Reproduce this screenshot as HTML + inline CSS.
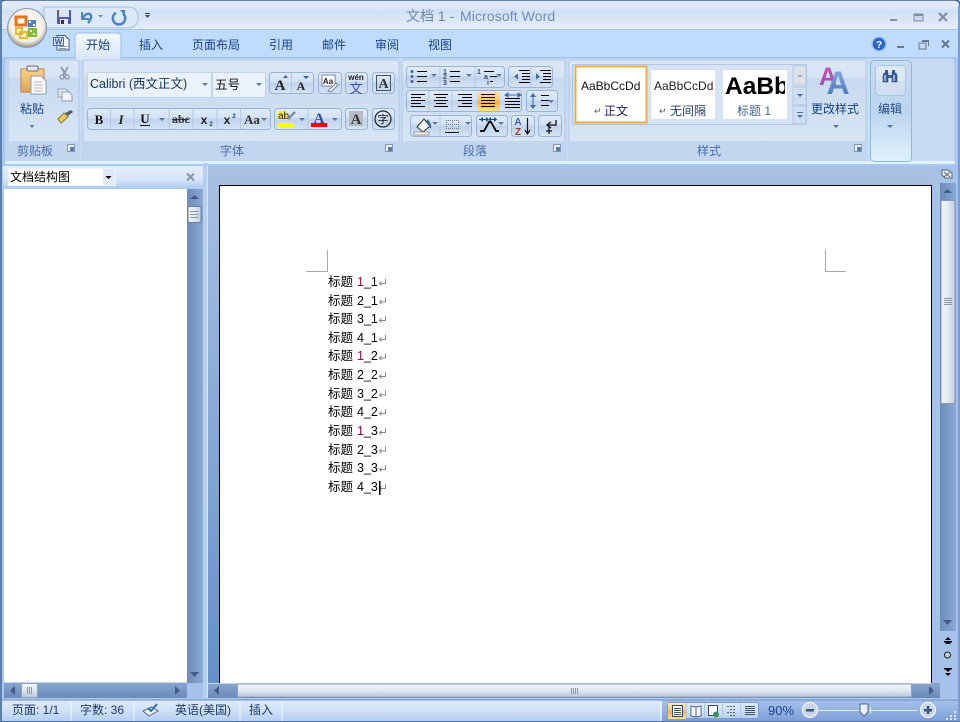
<!DOCTYPE html>
<html lang="zh"><head><meta charset="utf-8"><title>文档 1 - Microsoft Word</title>
<style>
html,body{margin:0;padding:0;background:#bfdbff;width:960px;height:722px;overflow:hidden}
svg{position:absolute;left:0;top:0;display:block}
text{font-family:"Liberation Sans","Noto Sans CJK SC",sans-serif;font-size:12px;fill:#15428b}
.k{fill:#111}.s{fill:#000;font-family:"Liberation Sans","WenQuanYi Zen Hei","Noto Sans CJK SC",sans-serif;font-size:12.5px}
.f{fill:#4a6ea9}
.l{stroke:#000;stroke-width:1;shape-rendering:crispEdges;fill:none}
.a{fill:#56749f}
</style></head><body>
<svg width="960" height="722" viewBox="0 0 960 722" xmlns="http://www.w3.org/2000/svg">
<defs>
<linearGradient id="t" x1="0" y1="0" x2="0" y2="1"><stop offset="0" stop-color="#e3eefb"/><stop offset=".3" stop-color="#d9e7f8"/><stop offset=".35" stop-color="#cfe0f5"/><stop offset="1" stop-color="#e4eefb"/></linearGradient>
<linearGradient id="g" x1="0" y1="0" x2="0" y2="1"><stop offset="0" stop-color="#dbe7f6"/><stop offset=".17" stop-color="#d6e3f4"/><stop offset=".19" stop-color="#c9daf0"/><stop offset="1" stop-color="#dbe8f7"/></linearGradient>
<linearGradient id="e" x1="0" y1="0" x2="0" y2="1"><stop offset="0" stop-color="#c8dcf3"/><stop offset=".5" stop-color="#bcd4ee"/><stop offset="1" stop-color="#def1fb"/></linearGradient>
<linearGradient id="b" x1="0" y1="0" x2="0" y2="1"><stop offset="0" stop-color="#e0ebf9"/><stop offset=".45" stop-color="#d2e1f4"/><stop offset=".5" stop-color="#bed2eb"/><stop offset="1" stop-color="#d5e4f6"/></linearGradient>
<linearGradient id="tab" x1="0" y1="0" x2="0" y2="1"><stop offset="0" stop-color="#f3f8fe"/><stop offset="1" stop-color="#dbe8f7"/></linearGradient>
<linearGradient id="o" x1="0" y1="0" x2="0" y2="1"><stop offset="0" stop-color="#fde9b4"/><stop offset=".45" stop-color="#fbc671"/><stop offset=".55" stop-color="#f9ad4a"/><stop offset="1" stop-color="#fee08e"/></linearGradient>
<linearGradient id="d" x1="0" y1="0" x2="0" y2="1"><stop offset="0" stop-color="#a9c1e3"/><stop offset="1" stop-color="#6590c9"/></linearGradient>
<linearGradient id="sb" x1="0" y1="0" x2="1" y2="0"><stop offset="0" stop-color="#6c8cba"/><stop offset="1" stop-color="#8aa8d2"/></linearGradient>
<linearGradient id="hs" x1="0" y1="0" x2="0" y2="1"><stop offset="0" stop-color="#88a6cf"/><stop offset="1" stop-color="#6b8ab8"/></linearGradient>
<linearGradient id="th" x1="0" y1="0" x2="1" y2="0"><stop offset="0" stop-color="#f2f6fb"/><stop offset=".5" stop-color="#e3e9f1"/><stop offset="1" stop-color="#c2cfe0"/></linearGradient>
<linearGradient id="thh" x1="0" y1="0" x2="0" y2="1"><stop offset="0" stop-color="#f2f6fb"/><stop offset=".5" stop-color="#dfe6ef"/><stop offset="1" stop-color="#b8c7da"/></linearGradient>
<linearGradient id="st" x1="0" y1="0" x2="0" y2="1"><stop offset="0" stop-color="#dfeafa"/><stop offset=".5" stop-color="#cfe0f7"/><stop offset="1" stop-color="#b4cff2"/></linearGradient>
<linearGradient id="sd" x1="0" y1="0" x2="0" y2="1"><stop offset="0" stop-color="#a6c1ea"/><stop offset=".5" stop-color="#93b2e2"/><stop offset="1" stop-color="#7c9ed6"/></linearGradient>
<linearGradient id="nav" x1="0" y1="0" x2="0" y2="1"><stop offset="0" stop-color="#e3eefc"/><stop offset=".6" stop-color="#d6e5fa"/><stop offset="1" stop-color="#a9c8f0"/></linearGradient>
<linearGradient id="paste" x1="0" y1="0" x2="0" y2="1"><stop offset="0" stop-color="#fbd48a"/><stop offset="1" stop-color="#e0a253"/></linearGradient>
<radialGradient id="orb" cx=".5" cy=".42" r=".6"><stop offset="0" stop-color="#fff"/><stop offset=".72" stop-color="#f3efe6"/><stop offset=".9" stop-color="#b0a898"/><stop offset="1" stop-color="#7b8aa0"/></radialGradient>
<linearGradient id="A1" x1="0" y1="0" x2="0" y2="1"><stop offset="0" stop-color="#c65ab8"/><stop offset="1" stop-color="#8f4bb0"/></linearGradient>
<linearGradient id="A2" x1="0" y1="0" x2="0" y2="1"><stop offset="0" stop-color="#8cb3e8"/><stop offset="1" stop-color="#4270b8"/></linearGradient>
</defs>

<!-- chrome -->
<rect width="960" height="722" fill="#a9c8f0"/>
<path d="M0 6Q0 0 6 0H954Q960 0 960 6V30H0Z" fill="url(#t)"/>
<path d="M0 6Q0 0 6 0H954Q960 0 960 6" fill="none" stroke="#3f6190" stroke-width="1.500"/>
<rect x="0" y="0" width="2" height="722" fill="#5b7fae"/><rect x="958" y="6" width="2" height="716" fill="#7d9ccb"/>
<rect x="2" y="29" width="956" height="1" fill="#a9c6ec"/>
<rect x="2" y="30" width="956" height="28" fill="#bfdbff"/>
<rect x="2" y="57" width="956" height="1" fill="#a4c3eb"/>
<rect x="5" y="58" width="950" height="105" rx="4" fill="#c7dbf3" stroke="#a9c5ea"/>
<rect x="5" y="161" width="950" height="3" fill="#dff2fb"/>

<!-- QAT -->
<path d="M44 7H128Q138 7 138 17.500Q138 28 128 28H44Z" fill="#dce9f9" stroke="#a7c0e0"/>
<circle cx="27" cy="28" r="19.500" fill="url(#orb)" stroke="#8398b5"/>
<g shape-rendering="crispEdges">
<rect x="16" y="17" width="10" height="8" fill="none" stroke="#e8741c" stroke-width="3"/>
<rect x="16" y="28" width="6" height="6" fill="none" stroke="#f0b429" stroke-width="2"/>
<rect x="20" y="32" width="7" height="6" fill="none" stroke="#eeb52e" stroke-width="2"/>
<rect x="28" y="20" width="8" height="7" fill="#4e82c4"/><rect x="29" y="21" width="2" height="2" fill="#fff"/><rect x="33" y="24" width="2" height="2" fill="#fff"/>
<rect x="28" y="28" width="9" height="9" fill="#85b942"/><rect x="30" y="30" width="2" height="2" fill="#e4f0cf"/><rect x="33" y="33" width="2" height="2" fill="#e4f0cf"/>
</g>
<g shape-rendering="crispEdges">
<rect x="57" y="10" width="14" height="14" fill="#5558bd"/><rect x="59" y="10" width="10" height="7" fill="#dbe2f5"/><rect x="60" y="19" width="8" height="5" fill="#e8e8e8"/><rect x="61" y="20" width="3" height="4" fill="#334"/>
</g>
<path d="M82 12V19H89" fill="none" stroke="#4c82c9" stroke-width="2"/>
<path d="M82.500 18.500Q86 12.500 90 14Q93 17 88 23" fill="none" stroke="#4c82c9" stroke-width="2.400"/>
<path d="M98 15h5l-2.500 3z" fill="#7a94bb"/>
<path d="M116 12.800A6.200 6.200 0 1 0 123 13.500" fill="none" stroke="#4c82c9" stroke-width="2.500"/>
<path d="M120 10H125V16Z" fill="#4c82c9"/>
<path d="M145 13h5v1h-5zM145 15h5l-2.500 3z" fill="#2c4a78"/>
<text x="406" y="21" style="font-size:14px;fill:#7489a4">文档 1 - </text><text x="460" y="21" style="font-size:14px;fill:#6f8eb8;letter-spacing:.1px">Microsoft Word</text>
<!-- window ctrl -->
<g shape-rendering="crispEdges" fill="#7d8ea6"><rect x="890" y="19" width="7" height="2"/>
<rect x="914" y="14" width="9" height="7" fill="#c8d8ee" stroke="#7d8ea6"/><rect x="914" y="14" width="9" height="2"/></g>
<path d="M939 13L947 21M947 13L939 21" stroke="#7d8ea6" stroke-width="2.200"/>
<g shape-rendering="crispEdges" fill="#66788f"><rect x="897" y="46" width="7" height="2"/>
<rect x="919" y="43" width="7" height="6" fill="#c8d8ee" stroke="#66788f"/><rect x="922" y="40" width="7" height="2"/><rect x="928" y="40" width="1" height="6"/></g>
<path d="M942 40.500L949 47.500M949 40.500L942 47.500" stroke="#66788f" stroke-width="2"/>
<circle cx="879" cy="44" r="7" fill="#2a66c8" stroke="#a9c3e8" stroke-width="1.500"/>
<text x="879" y="48" text-anchor="middle" style="font-size:10px;font-weight:bold;fill:#fff">?</text>
<!-- doc icon -->
<path d="M57 35.500H65L69 39.500V50H57Z" fill="#f4f6fa" stroke="#49596e"/>
<path d="M59 46.500h8M59 48.500h8" stroke="#8b98a8"/>
<rect x="53.500" y="37.500" width="10" height="8" fill="#dde7f7" stroke="#4a72b8"/><text x="58.500" y="44.500" text-anchor="middle" style="font-size:8px;font-weight:bold;fill:#2d5aa8">W</text>
<!-- tabs -->
<path d="M75 58V37Q75 33 79 33H117Q121 33 121 37V58Z" fill="url(#tab)" stroke="#9dbde4"/>
<rect x="76" y="56" width="44" height="4" fill="#dbe7f6"/>
<g>
<text x="86" y="49">开始</text><text x="139" y="49">插入</text><text x="192" y="49">页面布局</text><text x="269" y="49">引用</text><text x="322" y="49">邮件</text><text x="375" y="49">审阅</text><text x="428" y="49">视图</text>
</g>

<!-- groups -->
<g shape-rendering="crispEdges">
<rect x="8" y="60" width="71" height="100" rx="3" fill="url(#g)" stroke="#b0c9e8"/><rect x="9" y="141" width="69" height="19" fill="#c2d7ef"/>
<rect x="83" y="60" width="316" height="100" rx="3" fill="url(#g)" stroke="#b0c9e8"/><rect x="84" y="141" width="314" height="19" fill="#c2d7ef"/>
<rect x="402" y="60" width="163" height="100" rx="3" fill="url(#g)" stroke="#b0c9e8"/><rect x="403" y="141" width="161" height="19" fill="#c2d7ef"/>
<rect x="569" y="60" width="297" height="100" rx="3" fill="url(#g)" stroke="#b0c9e8"/><rect x="570" y="141" width="295" height="19" fill="#c2d7ef"/>
</g>
<rect x="870.500" y="60.500" width="41" height="101" rx="4" fill="url(#e)" stroke="#8fbbd2"/>
<g class="f"><text x="17" y="155" class="f">剪贴板</text><text x="220" y="155" class="f">字体</text><text x="463" y="155" class="f">段落</text><text x="697" y="155" class="f">样式</text></g>
<!-- launchers -->
<g shape-rendering="crispEdges">
<path d="M67.500 144.500h7v7h-7zM385.500 144.500h7v7h-7zM553.500 144.500h7v7h-7zM854.500 144.500h7v7h-7z" fill="#eef4fb" stroke="#7f98b8"/>
<path d="M70 147h4v4h-4zM388 147h4v4h-4zM556 147h4v4h-4zM857 147h4v4h-4z" fill="#5f7ba5"/></g>

<!-- clipboard -->
<path d="M21 69H44V92H21Z" fill="url(#paste)" stroke="#b8864a"/>
<rect x="27" y="66" width="11" height="5" rx="1" fill="#e4e8ee" stroke="#67717e"/>
<path d="M31 76H41L46 81V94H31Z" fill="#fff" stroke="#8e98a6"/>
<path d="M34 82h8M34 85h9M34 88h9M34 91h9" stroke="#a8b1bc"/>
<text x="20" y="113">粘贴</text><path d="M29.500 125h5l-2.500 3z" class="a"/>
<path d="M61 67L66 75M68 67L63 75" stroke="#8b98a9" stroke-width="1.800"/><circle cx="62" cy="77" r="2" fill="none" stroke="#8b98a9" stroke-width="1.300"/><circle cx="67" cy="77" r="2" fill="none" stroke="#8b98a9" stroke-width="1.300"/>
<path d="M58 89h8l3 3v5H58z" fill="#dde5ef" stroke="#93a2b6"/><path d="M62 92h7l3 3v6H62z" fill="#eef2f7" stroke="#93a2b6"/>
<path d="M58 119L64 113L68 117L61 123Z" fill="#e9cc58" stroke="#8c7a32"/><path d="M65 113L71 110L73 112L68 116Z" fill="#55606e"/>

<!-- font controls -->
<g shape-rendering="crispEdges">
<rect x="87.500" y="72.500" width="124" height="25" fill="#eaf2fc" stroke="#c2d4ea"/>
<rect x="212.500" y="72.500" width="53" height="25" fill="#eaf2fc" stroke="#c2d4ea"/>
</g>
<text x="90" y="88" style="font-size:12.500px;fill:#14305e">Calibri (西文正文)</text>
<text x="215" y="89" class="k" style="font-size:12.500px">五号</text>
<path d="M202 83h6l-3 3zM256 83h6l-3 3z" fill="#5f7ba5"/>
<rect x="269.500" y="72.500" width="44" height="21" rx="3" fill="url(#b)" stroke="#9ab4d6"/><path d="M291.500 73v20" stroke="#b4c8e2"/>
<rect x="318.500" y="72.500" width="23" height="21" rx="3" fill="url(#b)" stroke="#9ab4d6"/>
<rect x="345.500" y="72.500" width="22" height="21" rx="3" fill="url(#b)" stroke="#9ab4d6"/>
<rect x="372.500" y="72.500" width="22" height="21" rx="3" fill="url(#b)" stroke="#9ab4d6"/>
<rect x="87.500" y="108.500" width="183" height="21" rx="3" fill="url(#b)" stroke="#9ab4d6"/>
<path d="M110.500 109v20M134 109v20M169 109v20M193 109v20M217 109v20M240.500 109v20" stroke="#b4c8e2"/>
<rect x="274.500" y="108.500" width="67" height="21" rx="3" fill="url(#b)" stroke="#9ab4d6"/><path d="M308 109v20" stroke="#b4c8e2"/>
<rect x="345.500" y="108.500" width="22" height="21" rx="3" fill="url(#b)" stroke="#9ab4d6"/>
<rect x="372.500" y="108.500" width="22" height="21" rx="3" fill="url(#b)" stroke="#9ab4d6"/>
<g>
<text x="280" y="90" style="font-family:'Liberation Serif';font-size:15px;font-weight:bold;fill:#222;text-anchor:middle">A</text>
<text x="301" y="90" style="font-family:'Liberation Serif';font-size:12px;font-weight:bold;fill:#222;text-anchor:middle">A</text>
<path d="M283 78h5l-2.500-3zM303 76h6l-3 3z" fill="#3a5f96"/>
<text x="99" y="124" style="font-family:'Liberation Serif';font-size:13px;font-weight:bold;fill:#111;text-anchor:middle">B</text>
<text x="121" y="124" style="font-family:'Liberation Serif';font-size:13px;font-style:italic;font-weight:bold;fill:#222;text-anchor:middle">I</text>
<text x="145" y="123" style="font-family:'Liberation Serif';font-size:13px;font-weight:bold;fill:#111;text-anchor:middle">U</text><path d="M140 125.500h10" stroke="#111"/>
<text x="181" y="123" style="font-family:'Liberation Serif';font-size:12px;font-weight:bold;fill:#333;text-anchor:middle">abc</text><path d="M172 119.500h17" stroke="#333"/>
<text x="204" y="124" style="font-family:'Liberation Sans';font-size:12px;font-weight:bold;fill:#222;text-anchor:middle">x</text><text x="211" y="126" style="font-size:6px;font-weight:bold;text-anchor:middle">2</text>
<text x="227" y="124" style="font-family:'Liberation Sans';font-size:12px;font-weight:bold;fill:#222;text-anchor:middle">x</text><text x="234" y="118" style="font-size:6px;font-weight:bold;text-anchor:middle">2</text>
<text x="252" y="124" style="font-family:'Liberation Serif';font-size:13px;font-weight:bold;fill:#333;text-anchor:middle">Aa</text>
</g>
<path d="M159 118h6l-3 3zM261 118h6l-3 3zM299 118h6l-3 3zM332 118h6l-3 3z" fill="#5f7ba5"/>
<rect x="278" y="111" width="9" height="9" fill="#fbef4d"/>
<text x="278" y="119" style="font-size:10px;fill:#111">ab</text>
<path d="M288 119L295 112" stroke="#7d8da1" stroke-width="2.500"/>
<rect x="278" y="123" width="16" height="4" fill="#ffff00"/>
<text x="319" y="123" style="font-family:'Liberation Serif';font-size:15px;font-weight:bold;fill:#2d4f91;text-anchor:middle">A</text>
<rect x="311" y="123" width="16" height="4" fill="#ff0000"/>
<!-- clear -->
<rect x="322" y="75" width="13" height="11" fill="#fff" stroke="#7c8a9c"/><text x="328" y="84" style="font-size:8px;fill:#222;text-anchor:middle;font-weight:bold">Aa</text>
<path d="M328 91L336 83L338 85L331 92Z" fill="#f1f4f8" stroke="#7c8a9c"/>
<!-- wen -->
<text x="356" y="80" style="font-size:8px;font-weight:bold;fill:#222;text-anchor:middle">wén</text>
<text x="356" y="93" style="font-size:13px;fill:#3a4fc0;text-anchor:middle">文</text>
<!-- A border -->
<rect x="376.500" y="75.500" width="14" height="15" fill="none" stroke="#4a5563"/>
<text x="383.500" y="88" style="font-family:'Liberation Serif';font-size:14px;font-weight:bold;fill:#333;text-anchor:middle">A</text>
<rect x="349" y="111" width="14" height="15" fill="#b6bcc5"/>
<text x="356" y="124" style="font-family:'Liberation Serif';font-size:15px;font-weight:bold;fill:#333;text-anchor:middle">A</text>
<circle cx="383" cy="119" r="8" fill="none" stroke="#222" stroke-width="1.200"/>
<text x="383" y="123" style="font-size:11px;fill:#111;text-anchor:middle">字</text>

<!-- paragraph -->
<g fill="url(#b)" stroke="#9ab4d6">
<rect x="406.500" y="66.500" width="98" height="21" rx="3"/>
<rect x="508.500" y="66.500" width="44" height="21" rx="3"/>
<rect x="406.500" y="90.500" width="115" height="21" rx="3"/>
<rect x="526.500" y="90.500" width="31" height="21" rx="3"/>
<rect x="410.500" y="115.500" width="61" height="21" rx="3"/>
<rect x="476.500" y="115.500" width="31" height="21" rx="3"/>
<rect x="511.500" y="115.500" width="23" height="21" rx="3"/>
<rect x="538.500" y="115.500" width="23" height="21" rx="3"/>
</g>
<path d="M440 67v20M475 67v20M531 67v20M429 91v20M452 91v20M440 116v20" stroke="#b4c8e2" shape-rendering="crispEdges"/>
<rect x="477" y="91" width="23" height="20" fill="url(#o)"/>
<g class="l">
<path d="M417 71.500h10M417 76.500h10M417 81.500h10M450 71.500h10M450 76.500h10M450 81.500h10M484 71.500h10M490 76.500h7M490 81.500h3"/>
<path d="M411 94.500h14M411 97.500h10M411 100.500h14M411 103.500h10M411 106.500h14"/>
<path d="M434 94.500h14M436 97.500h10M434 100.500h14M436 103.500h10M434 106.500h14"/>
<path d="M458 94.500h14M462 97.500h10M458 100.500h14M462 103.500h10M458 106.500h14"/>
<path d="M481 94.500h14M481 97.500h14M481 100.500h14M481 103.500h14M481 106.500h14"/>
<path d="M505 98.500h15M505 101.500h15M505 104.500h15M505 107.500h15"/>
<path d="M541 95.500h8M541 100.500h8M541 105.500h8"/>
<path d="M519 70.500h11M522 73.500h8M522 76.500h8M522 79.500h8M519 82.500h11M540 70.500h11M543 73.500h8M543 76.500h8M543 79.500h8M540 82.500h11"/>
</g>
<g fill="#3f66a5"><circle cx="412" cy="71.500" r="1.500"/><circle cx="412" cy="76.500" r="1.500"/><circle cx="412" cy="81.500" r="1.500"/></g>
<g><text x="445" y="74" style="font-size:7px;font-weight:bold;fill:#334d7c;text-anchor:middle">1</text><text x="445" y="79" style="font-size:7px;font-weight:bold;fill:#334d7c;text-anchor:middle">2</text><text x="445" y="85" style="font-size:7px;font-weight:bold;fill:#334d7c;text-anchor:middle">3</text><text x="479" y="74" style="font-size:7px;font-weight:bold;fill:#334d7c;text-anchor:middle">1</text><text x="486" y="79" style="font-size:7px;font-weight:bold;fill:#334d7c;text-anchor:middle">a</text><text x="488" y="85" style="font-size:7px;font-weight:bold;fill:#334d7c;text-anchor:middle">i</text></g>
<path d="M431 74h6l-3 3zM466 74h6l-3 3zM496 74h6l-3 3zM548 100h6l-3 3z" fill="#5f7ba5"/>
<path d="M514 76.500l4-3v6zM536 73.500l4 3-4 3z" fill="#3a6ab0"/>
<path d="M506 94h16M506 94l3-2v4zM522 94l-3-2v4z" stroke="#3a6ab0" fill="#3a6ab0" transform="translate(-1 1)"/>
<path d="M533 93l-3 4h6zM533 109l-3-4h6z" fill="#3a6ab0"/><path d="M533 97v8" stroke="#3a6ab0"/>
<!-- shading, border -->
<path d="M417 127L424 119L430 126L423 132Z" fill="#f4f6f9" stroke="#333"/><path d="M427 120q4 4 3 8" stroke="#3a6ab0" stroke-width="2" fill="none"/>
<rect x="414" y="132" width="15" height="3" fill="#f3f3ec" stroke="#8e8e86" stroke-width=".8"/>
<path d="M432 122h6l-3 3zM465 122h6l-3 3zM498 122h6l-3 3z" fill="#5f7ba5"/>
<path d="M446 120.500h12M446 124.500h12M446 128.500h12M446.500 120v9M452.500 120v9M458.500 120v9" stroke="#6d7785" stroke-dasharray="1 1" shape-rendering="crispEdges" fill="none"/><path d="M445 132.500h14" stroke="#111" shape-rendering="crispEdges"/>
<!-- asian layout -->
<path d="M480 131H484L489 122H491L496 131H499" fill="none" stroke="#000" stroke-width="1.800"/>
<path d="M479 119.500h8M490 119.500h7" stroke="#20408c"/>
<path d="M483 117l-3 2.500 3 2.500zM486 117l3 2.500-3 2.500zM491 117l-3 2.500 3 2.500zM494 117l3 2.500-3 2.500z" fill="#20408c"/>
<text x="518" y="125" style="font-size:10px;font-weight:bold;fill:#3a5fa8;text-anchor:middle">A</text>
<text x="518" y="135" style="font-size:10px;font-weight:bold;fill:#a03a2c;text-anchor:middle">Z</text>
<path d="M527.500 118v15M525 130l2.500 4 2.500-4" stroke="#111" fill="none" stroke-width="1.200"/>
<path d="M556 120v5h-8M551 122l-4 3 4 3M549 127v7M546 131h6" stroke="#111" fill="none" stroke-width="1.300"/>

<!-- styles -->
<rect x="572.500" y="64.500" width="234" height="60" fill="#d5e3f5" stroke="#afc8e7"/>
<rect x="575.500" y="66.500" width="71" height="56" fill="#fff" stroke="#f5ae3d" stroke-width="2"/>
<rect x="651" y="70" width="64" height="49" fill="#fff"/><rect x="723" y="70" width="64" height="49" fill="#fff"/>
<text x="581" y="90" style="font-size:12px;fill:#111">AaBbCcDd</text>
<text x="654" y="90" style="font-size:12px;fill:#222">AaBbCcDd</text>
<svg x="723" y="70" width="62" height="49"><text x="2" y="24" style="font-size:24.500px;font-weight:bold;fill:#000">AaBbC</text></svg>
<text x="594" y="114" style="font-size:9px;fill:#556">↵</text><text x="604" y="115" style="fill:#1a1a6c">正文</text>
<text x="659" y="114" style="font-size:9px;fill:#556">↵</text><text x="670" y="115" style="fill:#1e3d70">无间隔</text>
<text x="737" y="115" style="fill:#42648f">标题 1</text>
<g shape-rendering="crispEdges">
<rect x="793" y="66" width="13" height="19" fill="#dde3ea" stroke="#b6c9e2"/>
<rect x="793" y="87" width="13" height="18" fill="#cfdff3" stroke="#b6c9e2"/>
<rect x="793" y="106" width="13" height="18" fill="#cfdff3" stroke="#b6c9e2"/>
</g>
<path d="M797 77h6l-3-3z" fill="#a5aeb9"/><path d="M797 94h6l-3 3zM797 115h6l-3 3z" fill="#4d6ea4"/><path d="M797 112.500h6" stroke="#4d6ea4"/>
<text x="828" y="85" style="font-family:'Liberation Sans';font-size:25px;font-weight:bold;fill:url(#A1);text-anchor:middle">A</text>
<text x="838" y="94" style="font-family:'Liberation Sans';font-size:32px;font-weight:bold;fill:url(#A2);text-anchor:middle">A</text>
<text x="811" y="113">更改样式</text><path d="M833 125h6l-3 3z" class="a"/>
<!-- edit -->
<rect x="875.500" y="65.500" width="30" height="30" rx="4" fill="#cfe0f3" stroke="#a7c3e2"/>
<rect x="876" y="66" width="29" height="15" rx="3" fill="#dce8f6"/>
<path d="M885 70h3v3h-3zM892 70h3v3h-3z" fill="#3b5a8f"/>
<path d="M884 73h4v9h-5v-6zM892 73h4l1 3v6h-5z" fill="#3a5f9f" stroke="#24407a" stroke-width=".6"/>
<path d="M885 75v6M894 75v6" stroke="#fff"/>
<rect x="888" y="75" width="4" height="3" fill="#3f5e92"/>
<text x="878" y="113" style="fill:#274f85">编辑</text><path d="M887 125h6l-3 3z" class="a"/>

<!-- nav pane -->
<rect x="3" y="166" width="201" height="23" fill="url(#nav)"/>
<rect x="8.500" y="168.500" width="107" height="17" fill="#fff" stroke="#edf3fb"/>
<rect x="103" y="169" width="12" height="16" fill="#dfe9f7"/><path d="M105.500 176h6l-3 3z" fill="#000"/>
<text x="10" y="181" class="s" style="font-size:12px">文档结构图</text>
<path d="M187 173.500L194 180.500M194 173.500L187 180.500" stroke="#8a96a6" stroke-width="2"/>
<rect x="4" y="189" width="183" height="494" fill="#fff"/>
<rect x="187" y="189" width="16" height="494" fill="url(#sb)"/>
<path d="M190 199h9l-4.500-4z" fill="#435c87"/>
<rect x="188" y="206.500" width="13" height="16" rx="1" fill="url(#th)" stroke="#6a7d9b"/>
<path d="M190 211.500h9M190 214.500h9M190 217.500h9" stroke="#8a98ab" shape-rendering="crispEdges"/>
<path d="M190 672h9l-4.500 5z" fill="#435c87"/>
<rect x="4" y="683" width="183" height="15" fill="url(#hs)"/><rect x="4" y="682" width="183" height="1" fill="#c0d5ef"/>
<rect x="187" y="683" width="16" height="15" fill="#a5c2ea"/>
<path d="M15 686v9l-5-4.500zM175 686v9l5-4.500z" fill="#425a82"/>
<rect x="21.500" y="683.500" width="16" height="14" rx="1" fill="url(#thh)" stroke="#8fa1bb"/>
<path d="M27.500 687v7M29.500 687v7M31.500 687v7" stroke="#8a98ab" shape-rendering="crispEdges"/>
<rect x="203" y="163" width="5" height="537" fill="#b6cff1"/><rect x="207" y="166" width="1" height="534" fill="#dbe8f9"/>

<!-- document area -->
<rect x="208" y="166" width="732" height="517" fill="url(#d)"/>
<rect x="219" y="185" width="713" height="499" fill="#000"/>
<rect x="220" y="186" width="711" height="498" fill="#fff"/>
<path d="M327.500 250v21.500H306M825.500 250v21.500H846" fill="none" stroke="#a9a9a9" shape-rendering="crispEdges"/>
<g>
<text class="s" x="328" y="286">标题<tspan x="357" fill="#8a0a46">1</tspan>_1</text>
<text class="s" x="328" y="305">标题<tspan x="357">2_1</tspan></text>
<text class="s" x="328" y="323">标题<tspan x="357">3_1</tspan></text>
<text class="s" x="328" y="342">标题<tspan x="357">4_1</tspan></text>
<text class="s" x="328" y="360">标题<tspan x="357" fill="#8a0a46">1</tspan>_2</text>
<text class="s" x="328" y="379">标题<tspan x="357">2_2</tspan></text>
<text class="s" x="328" y="398">标题<tspan x="357">3_2</tspan></text>
<text class="s" x="328" y="416">标题<tspan x="357">4_2</tspan></text>
<text class="s" x="328" y="435">标题<tspan x="357" fill="#8a0a46">1</tspan>_3</text>
<text class="s" x="328" y="454">标题<tspan x="357">2_3</tspan></text>
<text class="s" x="328" y="472">标题<tspan x="357">3_3</tspan></text>
<text class="s" x="328" y="491">标题<tspan x="357">4_3</tspan></text>
</g>
<g fill="none" stroke="#8a8a8a">
<path d="M385.500 279v4.500H379.500M381.500 281.500l-2 2 2 2"/>
<path d="M385.500 297.500v4.500H379.500M381.500 300l-2 2 2 2"/>
<path d="M385.500 316v4.500H379.500M381.500 318.500l-2 2 2 2"/>
<path d="M385.500 335v4.500H379.500M381.500 337.500l-2 2 2 2"/>
<path d="M385.500 353.500v4.500H379.500M381.500 356l-2 2 2 2"/>
<path d="M385.500 372v4.500H379.500M381.500 374.500l-2 2 2 2"/>
<path d="M385.500 390.500v4.500H379.500M381.500 393l-2 2 2 2"/>
<path d="M385.500 409v4.500H379.500M381.500 411.500l-2 2 2 2"/>
<path d="M385.500 428v4.500H379.500M381.500 430.500l-2 2 2 2"/>
<path d="M385.500 446.500v4.500H379.500M381.500 449l-2 2 2 2"/>
<path d="M385.500 465v4.500H379.500M381.500 467.500l-2 2 2 2"/>
<path d="M385.500 484v4.500H379.500M381.500 486.500l-2 2 2 2"/>
</g>
<rect x="379" y="481" width="1.500" height="14" fill="#000"/>

<!-- right scrollbar -->
<rect x="932" y="166" width="26" height="534" fill="#a5c2ea"/>
<rect x="932" y="166" width="8" height="20" fill="#a9c1e3"/>
<rect x="940" y="183" width="16" height="448" fill="url(#sb)"/>
<path d="M942 170l6 0 4 3v5h-7l-3-3z" fill="#eef1f5" stroke="#5a6675"/><path d="M944 172l6 5M950 172l-6 5" stroke="#5a6675"/>
<path d="M943 193h9l-4.500-4z" fill="#435c87"/>
<rect x="941" y="200.500" width="14" height="203" rx="1" fill="url(#th)" stroke="#8497b5"/>
<path d="M944 298.500h8M944 300.500h8M944 302.500h8M944 304.500h8" stroke="#8a98ab" shape-rendering="crispEdges"/>
<path d="M943 620h9l-4.500 5z" fill="#435c87"/>
<path d="M945 640h6l-3-3zM945 644h6l-3-3z" fill="#000"/><rect x="944" y="641" width="8" height="1.500" fill="#000"/>
<circle cx="947.500" cy="655" r="3" fill="#c6cdd6" stroke="#222"/>
<path d="M945 669h6l-3 3zM945 673h6l-3 3z" fill="#000"/><rect x="944" y="668" width="8" height="1.500" fill="#000"/>

<!-- horizontal scrollbar -->
<rect x="208" y="683" width="732" height="15" fill="url(#hs)"/><rect x="208" y="683" width="724" height="1" fill="#c0d5ef"/>
<path d="M219 686v9l-5-4.500zM929 686v9l5 -4.500z" fill="#425a82"/>
<rect x="237.500" y="684" width="674" height="13" rx="1" fill="url(#thh)" stroke="#8fa1bb"/>
<path d="M571.500 688v6M573.500 688v6M575.500 688v6M577.500 688v6" stroke="#8a98ab" shape-rendering="crispEdges"/>
<rect x="940" y="683" width="16" height="15" fill="#a5c2ea"/>

<!-- status -->
<rect x="2" y="698" width="956" height="2" fill="#a9c8f0"/>
<rect x="2" y="700" width="660" height="21" fill="url(#st)"/>
<rect x="662" y="700" width="296" height="21" fill="url(#sd)"/>
<rect x="0" y="699.500" width="960" height="1" fill="#6f8fbe"/>
<rect x="0" y="721" width="960" height="1" fill="#4f71a3"/>
<path d="M71 701v20M134 701v20M240 701v20M282 701v20M661 701v20" stroke="#f2f7fd" shape-rendering="crispEdges"/>
<g><text x="12" y="714" style="fill:#1c3a6c">页面: 1/1</text><text x="80" y="714" style="fill:#1c3a6c">字数: 36</text><text x="175" y="714" style="fill:#1c3a6c">英语(美国)</text><text x="249" y="714" style="fill:#1c3a6c">插入</text></g>
<path d="M143 711L152 707L158 711L149 716Z" fill="#eef2f7" stroke="#4a6a99"/><path d="M148 708l3 3 6-7" stroke="#3b6bb5" stroke-width="2" fill="none"/>
<rect x="667.500" y="702.500" width="91" height="16" rx="2" fill="url(#st)" stroke="#7f9dcc"/>
<rect x="668" y="703" width="18" height="16" fill="url(#o)"/>
<path d="M704.500 703v15M722.500 703v15M740.500 703v15M686.500 703v15" stroke="#b1c8e6" shape-rendering="crispEdges"/>
<rect x="672.500" y="705.500" width="10" height="11" fill="#fff" stroke="#3a4a60"/>
<path d="M674 708.500h7M674 710.500h7M674 712.500h7M674 714.500h7" stroke="#44546a" shape-rendering="crispEdges"/>
<path d="M691 706l5 1 5-1v10l-5 1-5-1zM696 707v10" fill="#f5f8fc" stroke="#55657c"/>
<rect x="708.500" y="705.500" width="9" height="10" fill="#fff" stroke="#3a4a60"/><circle cx="716" cy="714.500" r="3" fill="#3f8f5a"/>
<path d="M727 706.500h8M730 709.500h6M727 712.500h8M730 715.500h6" stroke="#55657c" stroke-dasharray="2 1" shape-rendering="crispEdges"/>
<path d="M745 706.500h10M745 708.500h10M745 710.500h10M745 712.500h10M745 714.500h10" stroke="#44546a" shape-rendering="crispEdges"/>
<text x="768" y="715" style="font-size:13px;fill:#20448a">90%</text>
<path d="M816 710.500h101" stroke="#dbe7f7" shape-rendering="crispEdges"/>
<circle cx="810" cy="710" r="7.500" fill="#c9d6e8" stroke="#fff"/><rect x="806" y="709" width="8" height="2.500" fill="#3f5478"/>
<circle cx="928" cy="710" r="7.500" fill="#c9d6e8" stroke="#fff"/><rect x="924" y="709" width="8" height="2.500" fill="#3f5478"/><rect x="926.800" y="706" width="2.500" height="8" fill="#3f5478"/>
<path d="M860 704h8v8l-4 4-4-4z" fill="#e9eff7" stroke="#4f678c"/><path d="M870.500 707v7" stroke="#e4edf9"/>
<g fill="#dbe7f7"><rect x="950" y="715" width="2" height="2"/><rect x="954" y="711" width="2" height="2"/><rect x="954" y="715" width="2" height="2"/><rect x="946" y="718" width="2" height="2"/><rect x="950" y="718" width="2" height="2"/><rect x="954" y="718" width="2" height="2"/></g>
</svg>
</body></html>
